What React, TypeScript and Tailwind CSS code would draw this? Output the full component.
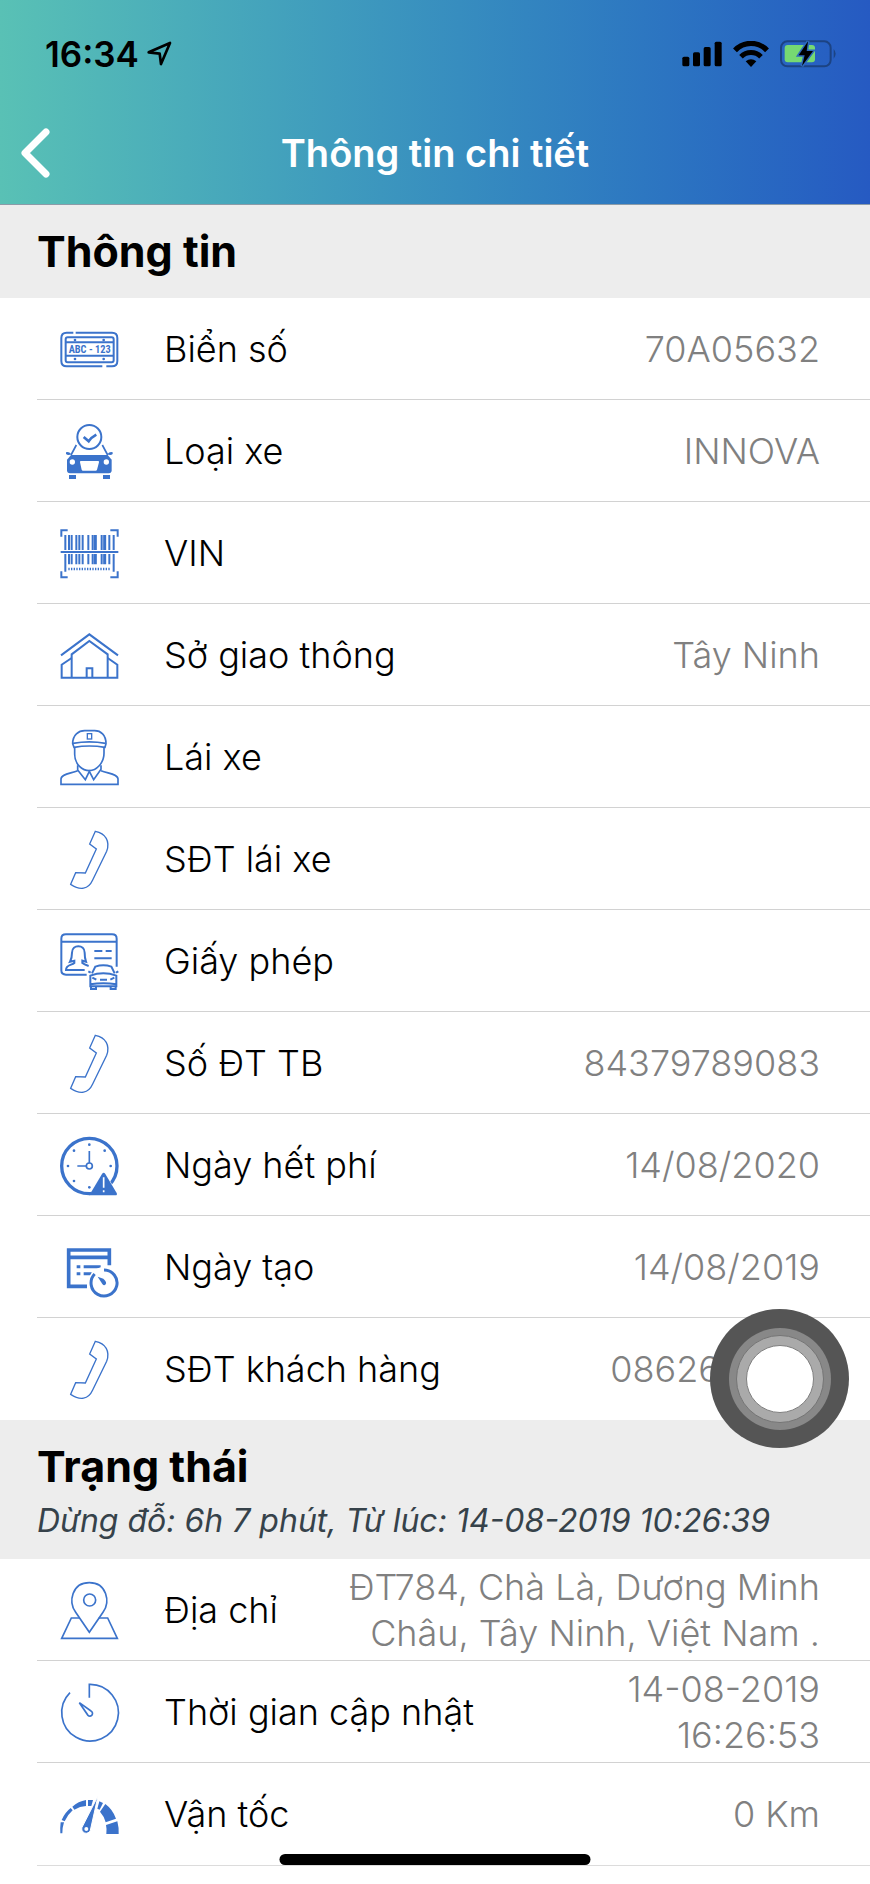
import type { ReactNode } from 'react';

// Line icons share one 174-unit grid
const Icon = ({ width = 5, children }: { width?: number; children: ReactNode }) => (
  <svg
    viewBox="0 0 174 174"
    className="w-[58px] h-[58px] shrink-0 text-[#3b73cb] overflow-visible"
    fill="none"
    stroke="currentColor"
    strokeWidth={width}
    aria-hidden="true"
  >
    {children}
  </svg>
);

const PlateIcon = () => (
  <Icon width={6}>
    <path d="M40 38H20Q4 38 4 54V123Q4 139 20 139H127M139 139H156Q172 139 172 123V54Q172 38 156 38H47" />
    <rect x="17" y="52" width="144" height="75" rx="6" />
    <path d="M17 67H161M17 107H161" />
    <g fill="currentColor" stroke="none">
      <circle cx="45" cy="60" r="4" />
      <circle cx="131" cy="60" r="4" />
      <circle cx="45" cy="117" r="4" />
      <circle cx="131" cy="117" r="4" />
      <text x="89" y="99" textAnchor="middle" fontSize="31" fontWeight="700" fontFamily="'Liberation Sans Narrow', 'Roboto Condensed', 'Liberation Sans', sans-serif">ABC - 123</text>
    </g>
  </Icon>
);

const CarIcon = () => (
  <Icon width={6}>
    <circle cx="88" cy="45" r="36" />
    <path d="M71 45L86 58Q94 46 109 38" strokeWidth="8" />
    <path d="M49 69L33 99M127 69L143 99" strokeWidth="5" />
    <g fill="currentColor" stroke="none">
      <path d="M18 91Q26 87 34 97Q24 102 18 96ZM158 91Q150 87 142 97Q152 102 158 96Z" />
      <path d="M33 99H143L155 113V145Q155 154 146 154H30Q21 154 21 145V113Z" />
      <rect x="27" y="159" width="21" height="12" />
      <rect x="129" y="159" width="21" height="12" />
    </g>
    <g fill="white" stroke="none">
      <circle cx="37" cy="120" r="8" />
      <circle cx="139" cy="120" r="8" />
      <path d="M63 117H114Q118 117 117 121L111 143Q110 146 107 146H69Q66 146 65 143L60 121Q59 117 63 117Z" />
    </g>
  </Icon>
);

const BarcodeIcon = () => (
  <Icon width={6}>
    <path d="M4 38V19H23M151 19H173V38M4 142V160H23M151 160H173V142" />
    <path d="M2 84H175" />
    <path d="M16 33V78M27 33V78M35 33V78M49 33V78M58 33V78M68 33V78M85 33V78M98 33V78M125 33V78M148 33V78M161 33V78" />
    <path d="M106 33V78M134 33V78" strokeWidth="9" />
    <path d="M16 90V143M161 90V143M27 90V121M35 90V121M49 90V121M58 90V121M68 90V121M85 90V121M98 90V121M125 90V121M148 90V121" />
    <path d="M106 90V121M134 90V121" strokeWidth="9" />
    <path d="M25 135H153" strokeWidth="7" strokeDasharray="4 4" />
  </Icon>
);

const GarageIcon = () => (
  <Icon width={6}>
    <path d="M3 88L88 25L174 88" />
    <path d="M35 155V85L88 45L143 85V155" />
    <path d="M35 96L5 116V155H172V116L143 96" />
    <path d="M80 155V127H97V155" />
  </Icon>
);

const DriverIcon = () => (
  <Icon>
    <path d="M38 47C38 20 56 8 74 8H104C122 8 138 20 138 47L135 58Q88 50 42 58Z" />
    <path d="M39 46Q88 37 137 46" />
    <rect x="82" y="17" width="13" height="16" strokeWidth="4" />
    <path d="M44 59V79C44 110 68 128 88 128S132 106 132 76V59" />
    <path d="M53 112V126L76 155L88 130L101 155L123 124V112" />
    <path d="M53 128C30 137 3 138 3 153V169H174V153C174 138 146 137 123 128" />
  </Icon>
);

const PhoneIcon = () => (
  <Icon width={4}>
    <path d="M106 4L89 42L109 57L76 129L47 128L32 163C60 182 85 179 98 150L140 64C151 34 137 10 106 4Z" />
  </Icon>
);

const LicenseIcon = () => (
  <Icon width={6}>
    <path d="M80 128H18Q4 128 4 115V20Q4 7 18 7H156Q170 7 170 20V104M4 29H170" />
    <path d="M103 57H127M137 57H155M103 79H155" />
    <path d="M86 102Q72 97 67 93V86L78 89Q74 78 74 62C74 36 36 36 36 62Q36 78 30 89L43 86V93C35 100 18 98 18 114H74" />
    <path d="M96 124L106 104Q130 96 154 104L164 124M85 118L92 122M175 118L168 122" />
    <path d="M91 131Q130 117 169 131V163H91ZM97 137L109 143M163 137L151 143M120 143H141M91 157Q130 151 169 157" />
    <path d="M93 163V171H108V163M152 163V171H167V163" />
  </Icon>
);

const ExpiryIcon = () => (
  <Icon width={5}>
    <circle cx="88" cy="90" r="83" strokeWidth="10" />
    <circle cx="88" cy="90" r="9" />
    <path d="M88 45V81M52 90H79" />
    <g fill="currentColor" stroke="none">
      <circle cx="88" cy="26" r="4" />
      <circle cx="88" cy="154" r="4" />
      <circle cx="24" cy="90" r="4" />
      <circle cx="152" cy="90" r="4" />
      <circle cx="42" cy="44" r="4" />
      <circle cx="134" cy="44" r="4" />
      <circle cx="42" cy="135" r="4" />
    </g>
    <path d="M131 102L88 182H178Z" fill="white" stroke="none" />
    <path d="M126 114Q131 106 136 114L170 171Q173 178 166 178H88Z" fill="currentColor" stroke="none" />
    <path d="M131 124V155M131 163V169" stroke="white" />
  </Icon>
);

const CreatedIcon = () => (
  <Icon width={9}>
    <path d="M81 145H26V36H148V82M26 58H148" strokeWidth="11" />
    <path d="M50 86H61M50 107H61M71 86H122M71 107H95" />
    <circle cx="132" cy="135" r="48" fill="white" stroke="none" />
    <path d="M132 96A39 39 0 1 1 104 108" />
    <path d="M113 116L130 122Q142 133 137 139T127 138Z" fill="currentColor" stroke="none" />
  </Icon>
);

const LocationIcon = () => (
  <Icon>
    <path d="M88 154L47 94C24 62 36 5 88 5S152 62 129 94Z" />
    <circle cx="89" cy="57" r="18" />
    <path d="M60 111H34L5 172H172L143 111H116" />
  </Icon>
);

const TimerIcon = () => (
  <Icon>
    <path d="M88 44V4A85 85 0 1 1 30 29" />
    <path d="M58 59L93 84A8 8 0 1 1 84 97Z" />
  </Icon>
);

const SpeedIcon = () => (
  <Icon>
    <g fill="currentColor" stroke="none">
      <path d="M1 145Q0 128 2 112H12Q7 128 7 145Z" />
      <path d="M5 105Q14 83 32 69L38 76Q22 90 14 109Z" />
      <path d="M37 65Q55 49 78 45V63Q60 64 43 74Z" />
      <path d="M84 45H99L94 63H84Z" />
      <path d="M118 49L129 54L119 74L112 71Z" />
      <path d="M136 57Q158 73 168 101L137 112Q132 93 120 80Z" />
      <path d="M138 120L172 109Q177 128 176 147H139Q141 133 138 120Z" />
    </g>
    <path d="M114 33L66 127A13 13 0 1 0 91 136Z" fill="currentColor" stroke="white" strokeWidth="3" />
    <circle cx="79" cy="132" r="6" fill="white" stroke="none" />
  </Icon>
);

type RowData = { label: string; value: string; icon: ReactNode; inset?: boolean };

const vehicleInfo: RowData[] = [
  { label: 'Biển số', value: '70A05632', icon: <PlateIcon /> },
  { label: 'Loại xe', value: 'INNOVA', icon: <CarIcon /> },
  { label: 'VIN', value: '', icon: <BarcodeIcon /> },
  { label: 'Sở giao thông', value: 'Tây Ninh', icon: <GarageIcon /> },
  { label: 'Lái xe', value: '', icon: <DriverIcon /> },
  { label: 'SĐT lái xe', value: '', icon: <PhoneIcon /> },
  { label: 'Giấy phép', value: '', icon: <LicenseIcon /> },
  { label: 'Số ĐT TB', value: '84379789083', icon: <PhoneIcon /> },
  { label: 'Ngày hết phí', value: '14/08/2020', icon: <ExpiryIcon /> },
  { label: 'Ngày tạo', value: '14/08/2019', icon: <CreatedIcon /> },
  { label: 'SĐT khách hàng', value: '08626', icon: <PhoneIcon />, inset: true },
];

const vehicleStatus: RowData[] = [
  { label: 'Địa chỉ', value: 'ĐT784, Chà Là, Dương Minh Châu, Tây Ninh, Việt Nam .', icon: <LocationIcon /> },
  { label: 'Thời gian cập nhật', value: '14-08-2019 16:26:53', icon: <TimerIcon /> },
  { label: 'Vận tốc', value: '0 Km', icon: <SpeedIcon /> },
];

const Row = ({ label, value, icon, inset }: RowData) => (
  <div className="flex items-center min-h-[102px] pl-[23px] pr-[50px]">
    {icon}
    <dt className="ml-[46px] shrink-0 text-black">{label}</dt>
    <dd className={`flex-1 pl-10 text-right text-[#808080] ${inset ? 'pr-[100px]' : ''}`}>{value}</dd>
  </div>
);

const List = ({ rows }: { rows: RowData[] }) => (
  <dl className="pl-[37px] text-[36px] leading-[46px] font-light divide-y divide-[#d2d2d2]">
    {rows.map((row) => (
      <Row key={row.label} {...row} />
    ))}
  </dl>
);

const StatusBar = () => (
  <div className="flex items-center justify-between h-[107px] pl-[45px] pr-[33px] text-black">
    <div className="flex items-center gap-2">
      <span className="text-[35px] leading-10 font-semibold">16:34</span>
      <svg viewBox="0 0 75 75" className="w-[25px] h-[25px]" fill="none" stroke="currentColor" strokeWidth="8" strokeLinejoin="round" aria-hidden="true">
        <path d="M5 34L69 6L42 69L38 38Z" />
      </svg>
    </div>
    <div className="flex items-center gap-[11px]">
      <svg viewBox="0 0 120 76" className="w-[40px] h-[26px]" fill="currentColor" aria-hidden="true">
        <rect x="1" y="46" width="21" height="29" rx="5" />
        <rect x="33" y="33" width="21" height="42" rx="5" />
        <rect x="65" y="17" width="21" height="58" rx="5" />
        <rect x="98" y="1" width="21" height="74" rx="5" />
      </svg>
      <svg viewBox="0 0 106 78" className="w-[36px] h-[26px]" fill="none" stroke="currentColor" strokeWidth="16" aria-hidden="true">
        <path d="M5 28A66 66 0 0 1 101 28" />
        <path d="M23 47A42 42 0 0 1 83 47" strokeWidth="15" />
        <path d="M53 78L37 61Q53 49 69 61Z" fill="currentColor" stroke="none" />
      </svg>
      <svg viewBox="0 0 171 84" className="w-[57px] h-[28px]" aria-hidden="true">
        <rect x="3" y="4" width="149" height="75" rx="19" fill="none" stroke="#1c4383" strokeWidth="6" />
        <path d="M161 27Q173 41 161 56Z" fill="#1c4383" />
        <rect x="14" y="15" width="91" height="52" rx="9" fill="#76d972" />
        <path d="M84 4L56 46H74L66 78L99 33H80Z" fill="black" stroke="#2d69bb" strokeWidth="9" paintOrder="stroke" />
      </svg>
    </div>
  </div>
);

function App() {
  return (
    <div className="relative min-h-screen bg-white font-[Inter,'Noto_Sans',sans-serif]">
      <header className="h-[205px] border-b border-[#8b9ba8] bg-linear-to-r from-[#59c1b5] to-[#265ac2]">
        <StatusBar />
        <div className="grid grid-cols-[1fr_auto_1fr] items-center h-[92px]">
          <button type="button" aria-label="Quay lại" className="justify-self-start pl-5 text-white">
            <svg viewBox="0 0 30 50" className="w-[30px] h-[50px]" fill="none" stroke="currentColor" strokeWidth="7" strokeLinecap="round" strokeLinejoin="round" aria-hidden="true">
              <path d="M26 4L5 25L26 46" />
            </svg>
          </button>
          <h1 className="text-[38px] leading-[46px] font-semibold text-white">Thông tin chi tiết</h1>
        </div>
      </header>

      <main>
        <section>
          <div className="px-[37px] pt-5 pb-[21px] bg-[#ededed]">
            <h2 className="text-[43px] leading-[52px] font-bold text-black">Thông tin</h2>
          </div>
          <List rows={vehicleInfo} />
        </section>

        <section>
          <div className="px-[37px] pt-5 pb-[18px] bg-[#ededed]">
            <h2 className="text-[43px] leading-[52px] font-bold text-black">Trạng thái</h2>
            <p className="pt-[9px] text-[32px] leading-10 italic text-[#36424a]">Dừng đỗ: 6h 7 phút, Từ lúc: 14-08-2019 10:26:39</p>
          </div>
          <List rows={vehicleStatus} />
          <hr className="ml-[37px] border-[#dcdcdc]" />
        </section>
      </main>

      {/* AssistiveTouch */}
      <button
        type="button"
        aria-label="AssistiveTouch"
        className="fixed right-[21px] bottom-[436px] flex items-center justify-center w-[139px] h-[139px] rounded-full bg-[#555555]"
      >
        <span className="flex items-center justify-center w-[102px] h-[102px] rounded-full bg-[#888888]">
          <span className="flex items-center justify-center w-[88px] h-[88px] rounded-full border border-[#757575] bg-[#aaaaaa]">
            <span className="w-[68px] h-[68px] rounded-full border border-[#808080] bg-white" />
          </span>
        </span>
      </button>

      <div className="fixed bottom-[19px] left-1/2 w-[311px] h-[11px] -translate-x-1/2 rounded-full bg-black" />
    </div>
  );
}

export default App;
